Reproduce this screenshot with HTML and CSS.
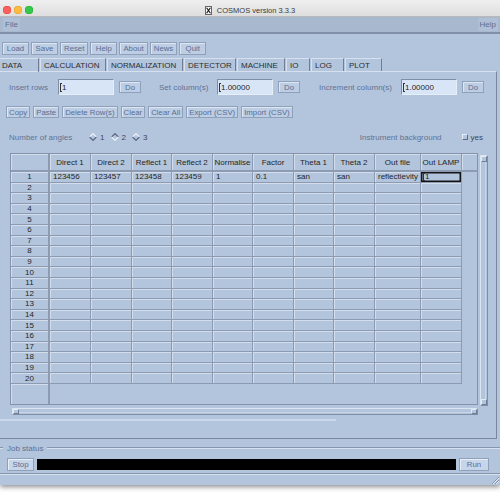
FILE: index.html
```html
<!DOCTYPE html>
<html lang="en">
<head>
<meta charset="utf-8">
<title>COSMOS version 3.3.3</title>
<link rel="stylesheet" href="styles.css">
</head>
<body>
<div class="window">
  <header class="titlebar">
    <div class="lights"><span class="light red"></span><span class="light yellow"></span><span class="light green"></span></div>
    <div class="title">
      <svg class="xlogo" width="7" height="9" viewBox="0 0 7 9"><rect x="0.5" y="0.5" width="6" height="8" fill="#fafafa" stroke="#666" stroke-width="1"/><path d="M1.6 1.8 L5.4 7.2 M5.4 1.8 L1.6 7.2" stroke="#111" stroke-width="1.1"/></svg>
      <span>COSMOS version 3.3.3</span>
    </div>
    <div></div>
  </header>
  <nav class="menubar"><span class="menu">File</span><span class="menu">Help</span></nav>
  <main class="main">
    <div class="toolbar">
      <div class="btn tb">Load</div>
      <div class="btn tb">Save</div>
      <div class="btn tb">Reset</div>
      <div class="btn tb">Help</div>
      <div class="btn tb">About</div>
      <div class="btn tb">News</div>
      <div class="btn tb">Quit</div>
    </div>
    <div class="tabs">
      <div class="tab sel t-data">DATA</div>
      <div class="tab t-calc">CALCULATION</div>
      <div class="tab t-norm">NORMALIZATION</div>
      <div class="tab t-det">DETECTOR</div>
      <div class="tab t-mach">MACHINE</div>
      <div class="tab t-io">IO</div>
      <div class="tab t-log">LOG</div>
      <div class="tab t-plot">PLOT</div>
    </div>
    <section class="panel">
      <div class="inputs">
        <span class="lbl l-ins">Insert rows</span>
        <div class="entry"><span class="cursor"></span>1</div>
        <div class="btn do">Do</div>
        <span class="lbl l-set">Set column(s)</span>
        <div class="entry"><span class="cursor"></span>1.00000</div>
        <div class="btn do">Do</div>
        <span class="lbl l-inc">Increment column(s)</span>
        <div class="entry"><span class="cursor"></span>1.00000</div>
        <div class="btn do">Do</div>
      </div>
      <div class="actions">
        <div class="btn ab">Copy</div>
        <div class="btn ab">Paste</div>
        <div class="btn ab">Delete Row(s)</div>
        <div class="btn ab">Clear</div>
        <div class="btn ab">Clear All</div>
        <div class="btn ab">Export (CSV)</div>
        <div class="btn ab">Import (CSV)</div>
      </div>
      <div class="angles">
        <span class="lbl l-ang">Number of angles</span>
        <span class="radio"><svg width="8" height="8" viewBox="0 0 8 8"><path d="M0.6 4 L4 0.6 L7.4 4" fill="none" stroke="#eef3fa" stroke-width="1.1"/><path d="M0.6 4 L4 7.4 L7.4 4" fill="none" stroke="#55617a" stroke-width="1.1"/></svg><span>1</span></span>
        <span class="radio"><svg width="8" height="8" viewBox="0 0 8 8"><path d="M0.6 4 L4 0.6 L7.4 4" fill="none" stroke="#55617a" stroke-width="1.1"/><path d="M0.6 4 L4 7.4 L7.4 4" fill="none" stroke="#eef3fa" stroke-width="1.1"/></svg><span>2</span></span>
        <span class="radio"><svg width="8" height="8" viewBox="0 0 8 8"><path d="M0.6 4 L4 0.6 L7.4 4" fill="none" stroke="#eef3fa" stroke-width="1.1"/><path d="M0.6 4 L4 7.4 L7.4 4" fill="none" stroke="#55617a" stroke-width="1.1"/></svg><span>3</span></span>
        <span class="spacer"></span>
        <span class="lbl">Instrument background</span>
        <span class="check"></span>
        <span class="yes">yes</span>
      </div>
      <div class="table-area">
        <div class="table-col">
          <div class="viewport">
            <div class="grid">
              <div class="h rh"></div><div class="h">Direct 1</div><div class="h">Direct 2</div><div class="h">Reflect 1</div><div class="h">Reflect 2</div><div class="h">Normalise</div><div class="h">Factor</div><div class="h">Theta 1</div><div class="h">Theta 2</div><div class="h">Out file</div><div class="h">Out LAMP</div><div class="h hf"></div>
              <div class="rh">1</div><div class="c">123456</div><div class="c">123457</div><div class="c">123458</div><div class="c">123459</div><div class="c">1</div><div class="c">0.1</div><div class="c">san</div><div class="c">san</div><div class="c">reflectievity</div><div class="c focus"><span class="cursor"></span>1</div><div class="f"></div>
              <div class="rh">2</div><div class="c"></div><div class="c"></div><div class="c"></div><div class="c"></div><div class="c"></div><div class="c"></div><div class="c"></div><div class="c"></div><div class="c"></div><div class="c"></div><div class="f"></div>
              <div class="rh">3</div><div class="c"></div><div class="c"></div><div class="c"></div><div class="c"></div><div class="c"></div><div class="c"></div><div class="c"></div><div class="c"></div><div class="c"></div><div class="c"></div><div class="f"></div>
              <div class="rh">4</div><div class="c"></div><div class="c"></div><div class="c"></div><div class="c"></div><div class="c"></div><div class="c"></div><div class="c"></div><div class="c"></div><div class="c"></div><div class="c"></div><div class="f"></div>
              <div class="rh">5</div><div class="c"></div><div class="c"></div><div class="c"></div><div class="c"></div><div class="c"></div><div class="c"></div><div class="c"></div><div class="c"></div><div class="c"></div><div class="c"></div><div class="f"></div>
              <div class="rh">6</div><div class="c"></div><div class="c"></div><div class="c"></div><div class="c"></div><div class="c"></div><div class="c"></div><div class="c"></div><div class="c"></div><div class="c"></div><div class="c"></div><div class="f"></div>
              <div class="rh">7</div><div class="c"></div><div class="c"></div><div class="c"></div><div class="c"></div><div class="c"></div><div class="c"></div><div class="c"></div><div class="c"></div><div class="c"></div><div class="c"></div><div class="f"></div>
              <div class="rh">8</div><div class="c"></div><div class="c"></div><div class="c"></div><div class="c"></div><div class="c"></div><div class="c"></div><div class="c"></div><div class="c"></div><div class="c"></div><div class="c"></div><div class="f"></div>
              <div class="rh">9</div><div class="c"></div><div class="c"></div><div class="c"></div><div class="c"></div><div class="c"></div><div class="c"></div><div class="c"></div><div class="c"></div><div class="c"></div><div class="c"></div><div class="f"></div>
              <div class="rh">10</div><div class="c"></div><div class="c"></div><div class="c"></div><div class="c"></div><div class="c"></div><div class="c"></div><div class="c"></div><div class="c"></div><div class="c"></div><div class="c"></div><div class="f"></div>
              <div class="rh">11</div><div class="c"></div><div class="c"></div><div class="c"></div><div class="c"></div><div class="c"></div><div class="c"></div><div class="c"></div><div class="c"></div><div class="c"></div><div class="c"></div><div class="f"></div>
              <div class="rh">12</div><div class="c"></div><div class="c"></div><div class="c"></div><div class="c"></div><div class="c"></div><div class="c"></div><div class="c"></div><div class="c"></div><div class="c"></div><div class="c"></div><div class="f"></div>
              <div class="rh">13</div><div class="c"></div><div class="c"></div><div class="c"></div><div class="c"></div><div class="c"></div><div class="c"></div><div class="c"></div><div class="c"></div><div class="c"></div><div class="c"></div><div class="f"></div>
              <div class="rh">14</div><div class="c"></div><div class="c"></div><div class="c"></div><div class="c"></div><div class="c"></div><div class="c"></div><div class="c"></div><div class="c"></div><div class="c"></div><div class="c"></div><div class="f"></div>
              <div class="rh">15</div><div class="c"></div><div class="c"></div><div class="c"></div><div class="c"></div><div class="c"></div><div class="c"></div><div class="c"></div><div class="c"></div><div class="c"></div><div class="c"></div><div class="f"></div>
              <div class="rh">16</div><div class="c"></div><div class="c"></div><div class="c"></div><div class="c"></div><div class="c"></div><div class="c"></div><div class="c"></div><div class="c"></div><div class="c"></div><div class="c"></div><div class="f"></div>
              <div class="rh">17</div><div class="c"></div><div class="c"></div><div class="c"></div><div class="c"></div><div class="c"></div><div class="c"></div><div class="c"></div><div class="c"></div><div class="c"></div><div class="c"></div><div class="f"></div>
              <div class="rh">18</div><div class="c"></div><div class="c"></div><div class="c"></div><div class="c"></div><div class="c"></div><div class="c"></div><div class="c"></div><div class="c"></div><div class="c"></div><div class="c"></div><div class="f"></div>
              <div class="rh">19</div><div class="c"></div><div class="c"></div><div class="c"></div><div class="c"></div><div class="c"></div><div class="c"></div><div class="c"></div><div class="c"></div><div class="c"></div><div class="c"></div><div class="f"></div>
              <div class="rh">20</div><div class="c"></div><div class="c"></div><div class="c"></div><div class="c"></div><div class="c"></div><div class="c"></div><div class="c"></div><div class="c"></div><div class="c"></div><div class="c"></div><div class="f"></div>
              <div class="rh end"></div><div class="blank"></div>
            </div>
          </div>
          <div class="hscroll"><span class="arrow"></span><span class="trough"></span><span class="arrow"></span></div>
        </div>
        <div class="vscroll"><span class="arrow"></span><span class="trough"></span><span class="arrow"></span></div>
      </div>
      <div class="lightline"></div>
    </section>
    <section class="job">
      <div class="legend"><span class="gl short"></span><span class="legend-text">Job status</span><span class="gl long"></span></div>
      <div class="controls">
        <div class="btn big">Stop</div>
        <div class="status"></div>
        <div class="btn big">Run</div>
      </div>
      <div class="groove"></div>
      <svg class="grip" width="8" height="8" viewBox="0 0 8 8"><path d="M1 8 L8 1 M4 8 L8 4" stroke="#8593aa" stroke-width="1"/><path d="M2 8 L8 2 M5 8 L8 5" stroke="#e6edf6" stroke-width="1"/></svg>
    </section>
  </main>
</div>
</body>
</html>
```

FILE: styles.css
```css
* { box-sizing: border-box; margin: 0; padding: 0; }
html, body { width: 500px; height: 500px; background: #ffffff; overflow: hidden; }
body { font-family: "Liberation Sans", Arial, Helvetica, sans-serif; font-size: 8px; color: #222; }

.window { width: 500px; height: 485px; background: #b3c5dd; display: flex; flex-direction: column; box-shadow: 0 2px 5px rgba(0,0,0,0.45); }

.titlebar { height: 17px; flex: none; display: grid; grid-template-columns: 1fr auto 1fr; align-items: center; padding-top: 4px; background: linear-gradient(#efefef, #dedede); border-bottom: 1px solid #b9b9b9; }
.lights { display: flex; gap: 3px; padding-left: 3px; }
.light { width: 8px; height: 8px; border-radius: 50%; }
.red { background: #fc605c; box-shadow: inset 0 0 0 0.5px #df4744; }
.yellow { background: #fdbc40; box-shadow: inset 0 0 0 0.5px #de9f34; }
.green { background: #34c84a; box-shadow: inset 0 0 0 0.5px #27aa35; }
.title { display: flex; align-items: center; gap: 5px; font-size: 7.5px; color: #3a3a3a; }
.xlogo { display: block; }

.menubar { height: 17px; flex: none; display: flex; justify-content: space-between; align-items: center; background: #a8b8cf; border-bottom: 2px solid #8290a7; padding: 0 2px 0 3px; }
.menu { color: #5d6f91; background: #afbfd6; padding: 2px 2px; line-height: 9px; }

.main { flex: 1; display: flex; flex-direction: column; }

.btn { display: flex; align-items: center; justify-content: center; white-space: nowrap; background: #bccde4; border: 1px solid #8fa0ba; box-shadow: inset 1px 1px 0 #dde7f3; color: #5b6e91; font-size: 7.8px; }

.toolbar { display: flex; gap: 2px; margin-top: 8px; padding-left: 2px; height: 13px; }
.tb { min-width: 27px; padding: 0 3px; height: 13px; }

.tabs { display: flex; margin-top: 3px; height: 13px; position: relative; z-index: 1; }
.tab { height: 13px; padding-left: 3px; display: flex; align-items: center; color: #2d2d2d; font-size: 8px; border-top: 1px solid #d6e0ee; border-left: 1px solid #d6e0ee; border-right: 1px solid #6f7d96; margin-right: 1px; }
.tab.sel { border-left: none; height: 14px; padding-left: 2px; }
.t-data { width: 39px; }
.t-calc { width: 66px; }
.t-norm { width: 76px; }
.t-det { width: 52px; }
.t-mach { width: 48px; }
.t-io { width: 24px; }
.t-log { width: 33px; }
.t-plot { width: 37px; }

.panel { width: 497px; height: 368px; border-top: 1px solid #d6e0ee; border-right: 1px solid #7a889f; border-bottom: 1px solid #7a889f; display: flex; flex-direction: column; }

.lbl { color: #5f7294; font-size: 8px; white-space: nowrap; }

.inputs { display: flex; align-items: center; margin-top: 7px; height: 16px; padding-left: 9px; }
.l-ins { width: 49px; }
.l-set { width: 58px; margin-left: 18px; }
.l-inc { width: 82px; margin-left: 19px; }
.entry { width: 56px; height: 16px; background: #d8e5f7; border: 1px solid; border-color: #7f8ea7 #e6eef8 #e6eef8 #7f8ea7; display: flex; align-items: center; padding-left: 1px; color: #1e1e1e; font-size: 8px; }
.cursor { width: 2px; height: 9px; border-left: 1px solid #333; border-top: 1px solid #333; border-bottom: 1px solid #333; margin-right: 0px; }
.do { width: 22px; height: 12px; margin-left: 5px; }

.actions { display: flex; gap: 3px; margin-top: 11px; height: 12px; padding-left: 6px; }
.ab { height: 12px; padding: 0 2px; }

.angles { display: flex; align-items: center; margin-top: 13px; height: 12px; padding-left: 9px; padding-right: 13px; }
.l-ang { width: 80px; }
.radio { display: flex; align-items: center; gap: 3px; width: 21.5px; color: #3c4660; font-size: 8px; }
.radio svg { display: block; }
.spacer { flex: 1; }
.check { width: 6px; height: 6px; margin-left: 20px; border: 1px solid; border-color: #e8eef7 #5d6a82 #5d6a82 #e8eef7; background: #b3c5dd; }
.yes { margin-left: 3px; color: #3c4660; font-size: 8px; }

.table-area { display: flex; margin-top: 10px; margin-left: 10px; gap: 2px; }
.table-col { display: flex; flex-direction: column; width: 468px; }
.viewport { width: 468px; height: 252px; border: 1px solid #8493ab; overflow: hidden; }
.grid { display: grid; height: 100%; grid-template-columns: 39px 41px 41px 40px 41px 40px 41px 40px 41px 46px 41px 1fr; grid-template-rows: 18px repeat(20, 10.6px) 1fr; }
.h, .c, .rh { border-right: 1px solid #8d9bb2; border-bottom: 1px solid #8d9bb2; box-shadow: inset 1px 1px 0 #d3ddeb; display: flex; align-items: center; overflow: hidden; white-space: nowrap; font-size: 8px; color: #252525; }
.h { justify-content: center; border-bottom: 2px solid #8d9bb2; }
.hf { border-right: none; }
.c { padding-left: 3px; }
.rh { justify-content: center; border-right: 2px solid #8d9bb2; }
.rh.end { border-bottom: none; }
.f, .blank { background: transparent; }
.blank { grid-column: 2 / -1; }
.focus { box-shadow: inset 0 0 0 1.5px #151515; padding-left: 2px; }
.focus .cursor { height: 8px; }

.hscroll { display: flex; margin-top: 3px; margin-left: 2px; height: 7px; border: 1px solid; border-color: #dbe5f1 #7f8ea7 #7f8ea7 #dbe5f1; }
.vscroll { display: flex; flex-direction: column; margin-top: 2px; width: 8px; height: 251px; border: 1px solid; border-color: #dbe5f1 #7f8ea7 #7f8ea7 #dbe5f1; }
.arrow { flex: none; width: 6px; height: 6px; border: 1px solid; border-color: #e3ebf5 #6f7d96 #6f7d96 #e3ebf5; }
.hscroll .arrow { height: 5px; }
.vscroll .arrow { width: 6px; }
.trough { flex: 1; }
.hscroll .trough { border-bottom: 1px solid #c8d4e5; margin-bottom: 1px; }
.vscroll .trough { border-right: 1px solid #c8d4e5; margin-right: 1px; }

.lightline { width: 336px; height: 2px; margin-top: 4px; background: #cbd8e9; }

.job { height: 46px; display: flex; flex-direction: column; position: relative; }
.legend { display: flex; align-items: center; height: 10px; margin-top: 4px; }
.gl { height: 2px; border-top: 1px solid #8896ad; border-bottom: 1px solid #d6e0ee; }
.gl.short { width: 3px; }
.gl.long { flex: 1; }
.legend-text { color: #5f7294; padding: 0 4px; font-size: 8px; }
.controls { display: flex; align-items: center; margin-top: 5px; height: 13px; padding-left: 7px; }
.big { height: 13px; background: #c6d5ea; box-shadow: inset 1px 1px 0 #e6eef8; }
.controls .big:first-child { width: 27px; }
.controls .big:last-child { width: 30px; }
.status { width: 419px; height: 11px; background: #000; margin: 0 3px; }
.groove { margin-top: 2px; height: 2px; border-top: 1px solid #8896ad; border-bottom: 1px solid #d6e0ee; }
.grip { position: absolute; right: 1px; bottom: 1px; }
```
